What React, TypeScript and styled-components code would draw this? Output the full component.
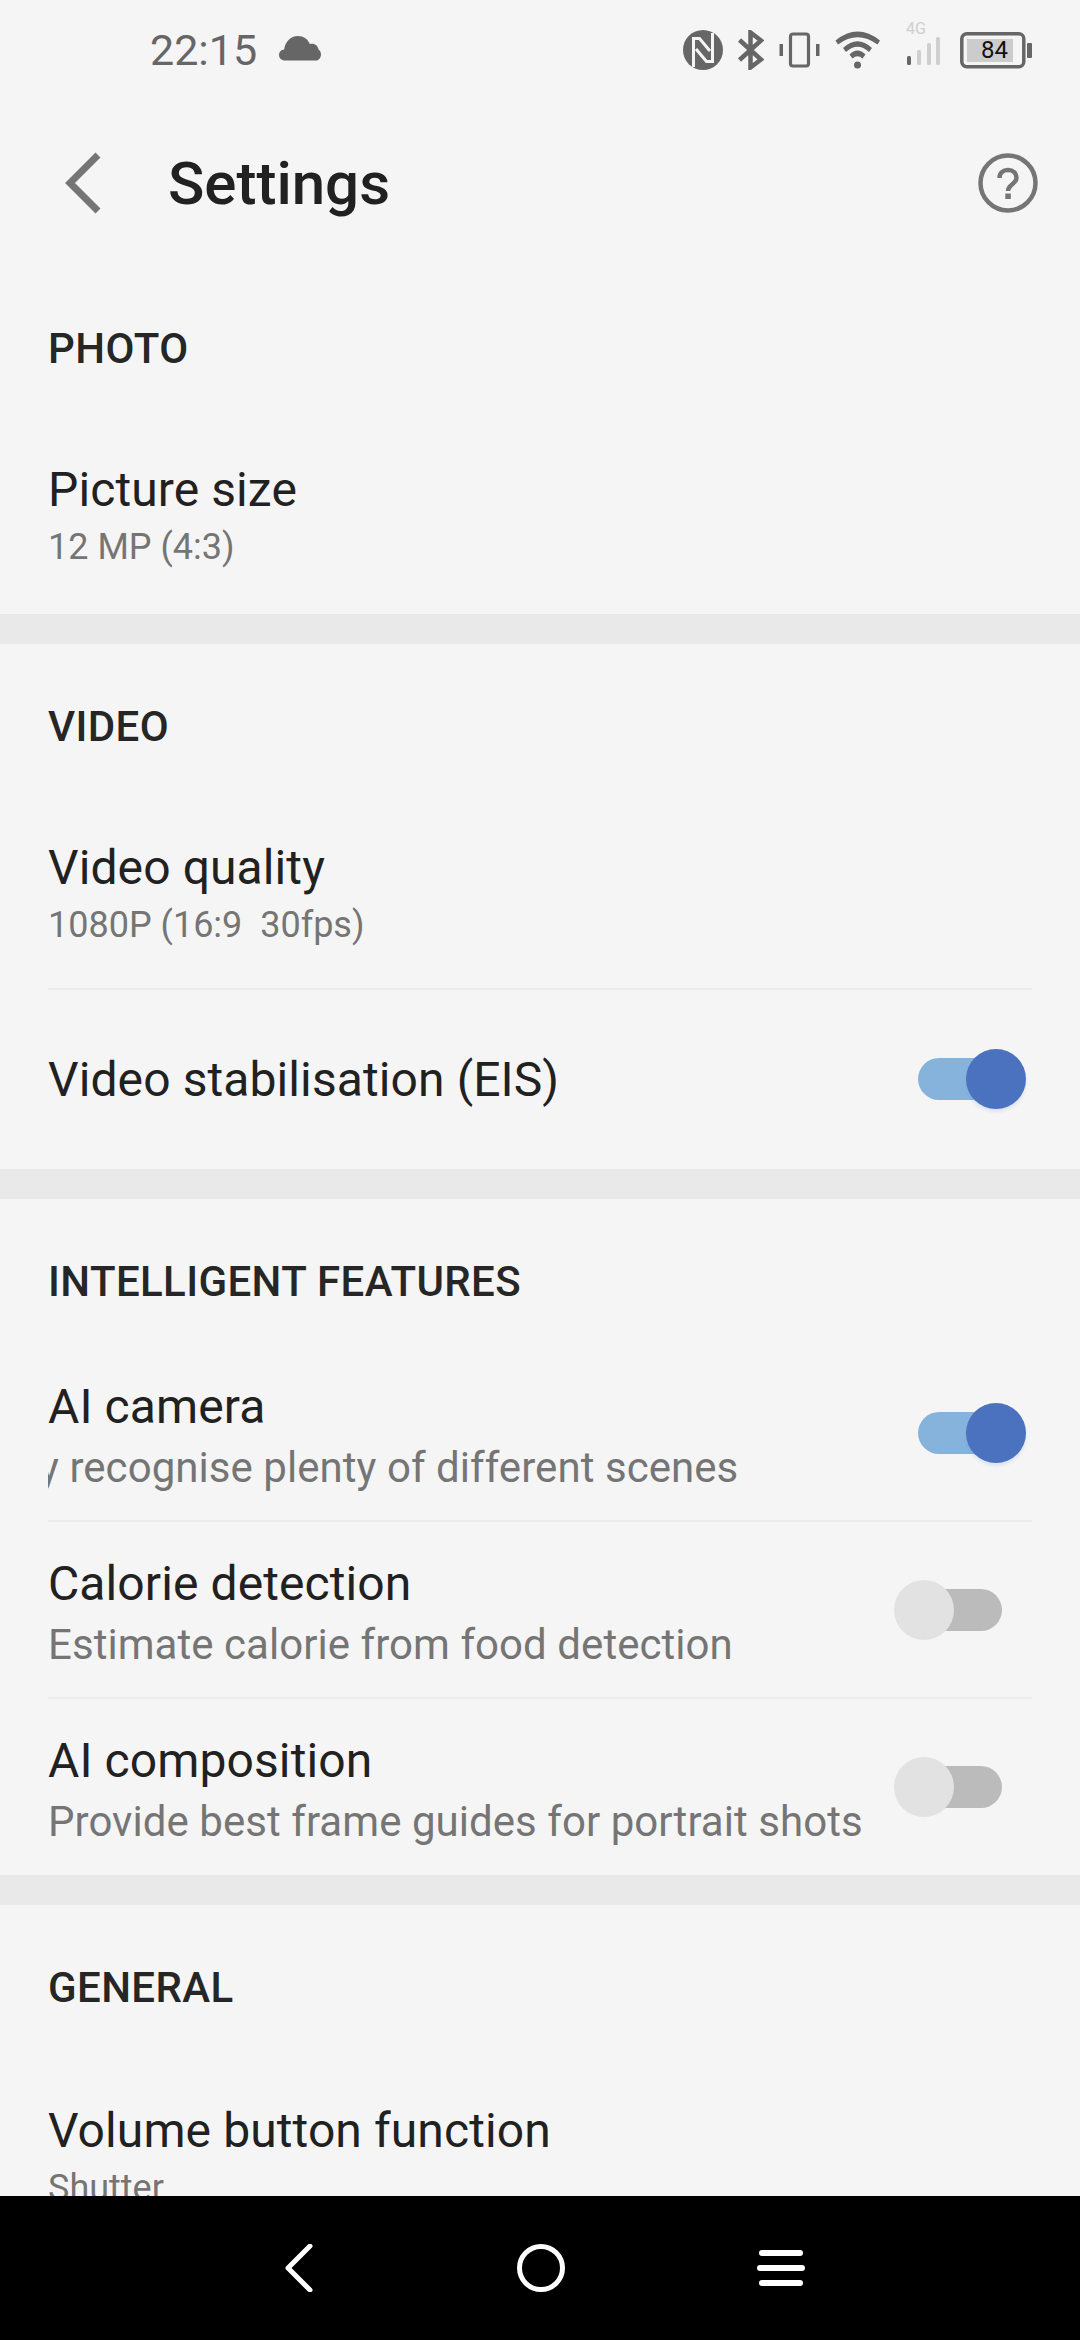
import * as React from 'react';
import styled, { createGlobalStyle } from 'styled-components';

const GlobalStyle = createGlobalStyle`
    html, body {
        margin: 0;
        padding: 0;
        background: #f5f5f5;
    }
    * {
        box-sizing: border-box;
    }
`;

const Screen = styled.div`
    width: 1080px;
    height: 2340px;
    display: flex;
    flex-direction: column;
    overflow: hidden;
    background: #f5f5f5;
    font-family: Roboto, 'Noto Sans', sans-serif;
`;

const StatusBar = styled.div`
    height: 100px;
    flex: none;
    display: flex;
    align-items: center;
    padding: 0 48px 0 150px;
`;

const Clock = styled.span`
    font-size: 43px;
    color: #666;
    margin-right: 22px;
`;

const CloudSlot = styled.div`
    display: flex;
    margin-top: -4px;
`;

const StatusIcons = styled.div`
    margin-left: auto;
    display: flex;
    align-items: center;
    gap: 15px;
`;

const SignalSlot = styled.div`
    display: flex;
    margin: 0 5px 0 10px;
`;

const Header = styled.div`
    height: 166px;
    flex: none;
    display: flex;
    align-items: center;
    padding: 0 42px 0 64px;
`;

const Title = styled.h1`
    margin: 0 0 0 66px;
    font-size: 60px;
    font-weight: 500;
    color: #212121;
`;

const HelpButton = styled.div`
    margin-left: auto;
    display: flex;
`;

const Scroller = styled.div`
    flex: 1;
    min-height: 0;
    overflow: hidden;
`;

const Section = styled.section`
    border-bottom: 30px solid #e9e9e9;
    &:last-child {
        border-bottom: 0;
    }
`;

const SectionTitle = styled.h2<{ $height?: number }>`
    margin: 0;
    height: ${p => p.$height || 162}px;
    padding: 58px 48px 0;
    font-size: 42px;
    line-height: 50px;
    font-weight: 500;
    letter-spacing: 0.4px;
    color: #262626;
`;

const Row = styled.div<{ $height: number; $divided?: boolean; $center?: boolean; $top?: number }>`
    height: ${p => p.$height}px;
    margin: 0 48px;
    padding-top: ${p => p.$top || 0}px;
    display: flex;
    align-items: ${p => (p.$center ? 'center' : 'flex-start')};
    position: relative;
    border-bottom: ${p => (p.$divided ? '2px solid #ebebeb' : '0')};
`;

const RowText = styled.div`
    min-width: 0;
    overflow: hidden;
`;

const RowTitle = styled.div`
    font-size: 48px;
    line-height: 60px;
    letter-spacing: 0.1px;
    color: #212121;
`;

const RowSub = styled.div<{ $large?: boolean; $shift?: number }>`
    font-size: ${p => (p.$large ? 42 : 36)}px;
    line-height: 50px;
    margin-top: ${p => (p.$large ? 6 : 2)}px;
    letter-spacing: ${p => (p.$large ? 0.05 : 0)}px;
    color: #757575;
    white-space: pre;
    text-indent: ${p => p.$shift || 0}px;
`;

const SwitchTrack = styled.div<{ $on: boolean; $top: number }>`
    position: absolute;
    top: ${p => p.$top}px;
    right: ${p => (p.$on ? 12 : 30)}px;
    width: 102px;
    height: 42px;
    border-radius: 21px;
    background: ${p => (p.$on ? '#85b3db' : '#bbbbbb')};
`;

const Knob = styled.div<{ $on: boolean }>`
    position: absolute;
    top: -9px;
    left: ${p => (p.$on ? '48px' : '-6px')};
    width: 60px;
    height: 60px;
    border-radius: 50%;
    background: ${p => (p.$on ? '#4a72bf' : '#e2e2e2')};
    box-shadow: ${p => (p.$on ? '0 3px 3px rgba(74, 114, 191, 0.12)' : 'none')};
`;

const NavBar = styled.div`
    height: 144px;
    flex: none;
    background: #000;
    display: flex;
    align-items: center;
    gap: 192px;
    padding-left: 284px;
`;

const Switch = ({ on, top }: { on: boolean; top: number }) => (
    <SwitchTrack $on={on} $top={top}>
        <Knob $on={on} />
    </SwitchTrack>
);

const Cloud = () => (
    <svg width="42" height="26" viewBox="0 0 42 26">
        <path
            fill="#666"
            d="M6 25.500C2.500 25.500 0 23 0 20s2.200-5.200 5.200-5.500C6 7 11.500 1 19 1c5.500 0 10 3.200 11.800 8 .7-.3 1.200-.3 2.200-.3 3.500 0 6 2.300 6.500 5.800 1.500.8 2.500 2.800 2.500 5 0 3.300-2.300 6-5 6H6z"
        />
    </svg>
);

const NfcIcon = () => (
    <svg width="40" height="40" viewBox="0 0 40 40">
        <circle cx="20" cy="20" r="20" fill="#666" />
        <path
            d="M10.500 37V8.500h6L27 21M29.500 3v28.500h-6L13 19"
            fill="none"
            stroke="#f5f5f5"
            strokeWidth="3"
        />
    </svg>
);

const BluetoothIcon = () => (
    <svg width="26" height="40" viewBox="0 0 26 40">
        <path d="M1.500 10L23 29.500 12.500 37.500V2.500L23 10.500 1.500 30" fill="none" stroke="#666" strokeWidth="4.500" />
    </svg>
);

const VibrateIcon = () => (
    <svg width="41" height="36" viewBox="0 0 41 36">
        <rect x="11.500" y="2" width="18" height="32" rx="2.500" fill="none" stroke="#666" strokeWidth="3.200" />
        <rect x="0.500" y="12" width="3.500" height="12" fill="#666" />
        <rect x="37" y="12" width="3.500" height="12" fill="#666" />
    </svg>
);

const WifiIcon = () => (
    <svg width="46" height="38" viewBox="0 0 46 38">
        <path d="M0.500 9.500Q22.500-8.500 45 9.500L42.500 13.500Q22.500-1 3 13.500Z" fill="#666" />
        <path d="M8 17Q22.500 3.500 37 17L34 21Q22.500 10.500 11 21Z" fill="#666" />
        <path d="M14.500 23.500Q22.500 15.500 30.500 23.500L27.500 27.500Q22.500 23 17.500 27.500Z" fill="#666" />
        <circle cx="22.500" cy="34" r="3.500" fill="#666" />
    </svg>
);

const SignalIcon = () => (
    <svg width="34" height="68" viewBox="0 -6 34 68">
        <text x="0" y="11.500" fontFamily="Roboto, sans-serif" fontSize="16" fill="#cfcfcf">
            4G
        </text>
        <rect x="1" y="34" width="4" height="9" rx="1.500" fill="#666" />
        <rect x="11" y="28" width="4" height="15" rx="1.500" fill="#cfcfcf" />
        <rect x="21" y="21" width="4" height="22" rx="1.500" fill="#cfcfcf" />
        <rect x="30" y="15" width="4" height="28" rx="1.500" fill="#cfcfcf" />
    </svg>
);

const BatteryIcon = () => (
    <svg width="72" height="37" viewBox="0 0 72 37">
        <rect x="1.800" y="1.800" width="62" height="33" rx="5" fill="none" stroke="#666" strokeWidth="3.500" />
        <rect x="7" y="7" width="46" height="23" fill="#cccccc" />
        <rect x="67" y="11" width="5" height="15" rx="1" fill="#666" />
        <text x="21" y="26" fontFamily="Roboto, sans-serif" fontSize="24" fill="#111">
            84
        </text>
    </svg>
);

const BackIcon = () => (
    <svg width="38" height="64" viewBox="0 0 38 64">
        <path d="M34 4L6 32l28 28" fill="none" stroke="#757575" strokeWidth="7" />
    </svg>
);

const HelpIcon = () => (
    <svg width="60" height="60" viewBox="0 0 60 60">
        <circle cx="30" cy="30" r="27.500" fill="none" stroke="#757575" strokeWidth="4.500" />
        <path
            d="M21.500 25c0-5 3.500-8 8.500-8s8.500 3.300 8.500 8c0 6-8.500 6.500-8.500 13"
            fill="none"
            stroke="#757575"
            strokeWidth="4.500"
        />
        <rect x="27.300" y="40.500" width="5.500" height="5.500" fill="#757575" />
    </svg>
);

const NavBack = () => (
    <svg width="41" height="48" viewBox="0 0 41 48">
        <path d="M26 2L4 24l22 22" fill="none" stroke="#fff" strokeWidth="5" strokeLinecap="round" strokeLinejoin="round" />
    </svg>
);

const NavHome = () => (
    <svg width="48" height="48" viewBox="0 0 48 48">
        <circle cx="24" cy="24" r="21.500" fill="none" stroke="#fff" strokeWidth="5" />
    </svg>
);

const NavMenu = () => (
    <svg width="48" height="36" viewBox="0 0 48 36">
        <rect x="2" y="0" width="44" height="6" rx="3" fill="#fff" />
        <rect x="0" y="15" width="48" height="6" rx="3" fill="#fff" />
        <rect x="2" y="30" width="44" height="6" rx="3" fill="#fff" />
    </svg>
);

export default function App() {
    return (
        <Screen>
            <GlobalStyle />
            <StatusBar>
                <Clock>22:15</Clock>
                <CloudSlot>
                    <Cloud />
                </CloudSlot>
                <StatusIcons>
                    <NfcIcon />
                    <BluetoothIcon />
                    <VibrateIcon />
                    <WifiIcon />
                    <SignalSlot>
                        <SignalIcon />
                    </SignalSlot>
                    <BatteryIcon />
                </StatusIcons>
            </StatusBar>
            <Header>
                <BackIcon />
                <Title>Settings</Title>
                <HelpButton>
                    <HelpIcon />
                </HelpButton>
            </Header>
            <Scroller>
                <Section>
                    <SectionTitle>PHOTO</SectionTitle>
                    <Row $height={186} $top={32}>
                        <RowText>
                            <RowTitle>Picture size</RowTitle>
                            <RowSub>12 MP (4:3)</RowSub>
                        </RowText>
                    </Row>
                </Section>
                <Section>
                    <SectionTitle>VIDEO</SectionTitle>
                    <Row $height={184} $top={32} $divided>
                        <RowText>
                            <RowTitle>Video quality</RowTitle>
                            <RowSub>1080P (16:9  30fps)</RowSub>
                        </RowText>
                    </Row>
                    <Row $height={179} $center>
                        <RowText>
                            <RowTitle>Video stabilisation (EIS)</RowTitle>
                        </RowText>
                        <Switch on top={68} />
                    </Row>
                </Section>
                <Section>
                    <SectionTitle $height={145}>INTELLIGENT FEATURES</SectionTitle>
                    <Row $height={178} $top={33} $divided>
                        <RowText>
                            <RowTitle>AI camera</RowTitle>
                            <RowSub $large $shift={-9}>y recognise plenty of different scenes</RowSub>
                        </RowText>
                        <Switch on top={68} />
                    </Row>
                    <Row $height={177} $top={32} $divided>
                        <RowText>
                            <RowTitle>Calorie detection</RowTitle>
                            <RowSub $large>Estimate calorie from food detection</RowSub>
                        </RowText>
                        <Switch on={false} top={67} />
                    </Row>
                    <Row $height={176} $top={32}>
                        <RowText>
                            <RowTitle>AI composition</RowTitle>
                            <RowSub $large>Provide best frame guides for portrait shots</RowSub>
                        </RowText>
                        <Switch on={false} top={67} />
                    </Row>
                </Section>
                <Section>
                    <SectionTitle>GENERAL</SectionTitle>
                    <Row $height={186} $top={34}>
                        <RowText>
                            <RowTitle>Volume button function</RowTitle>
                            <RowSub>Shutter</RowSub>
                        </RowText>
                    </Row>
                </Section>
            </Scroller>
            <NavBar>
                <NavBack />
                <NavHome />
                <NavMenu />
            </NavBar>
        </Screen>
    );
}
